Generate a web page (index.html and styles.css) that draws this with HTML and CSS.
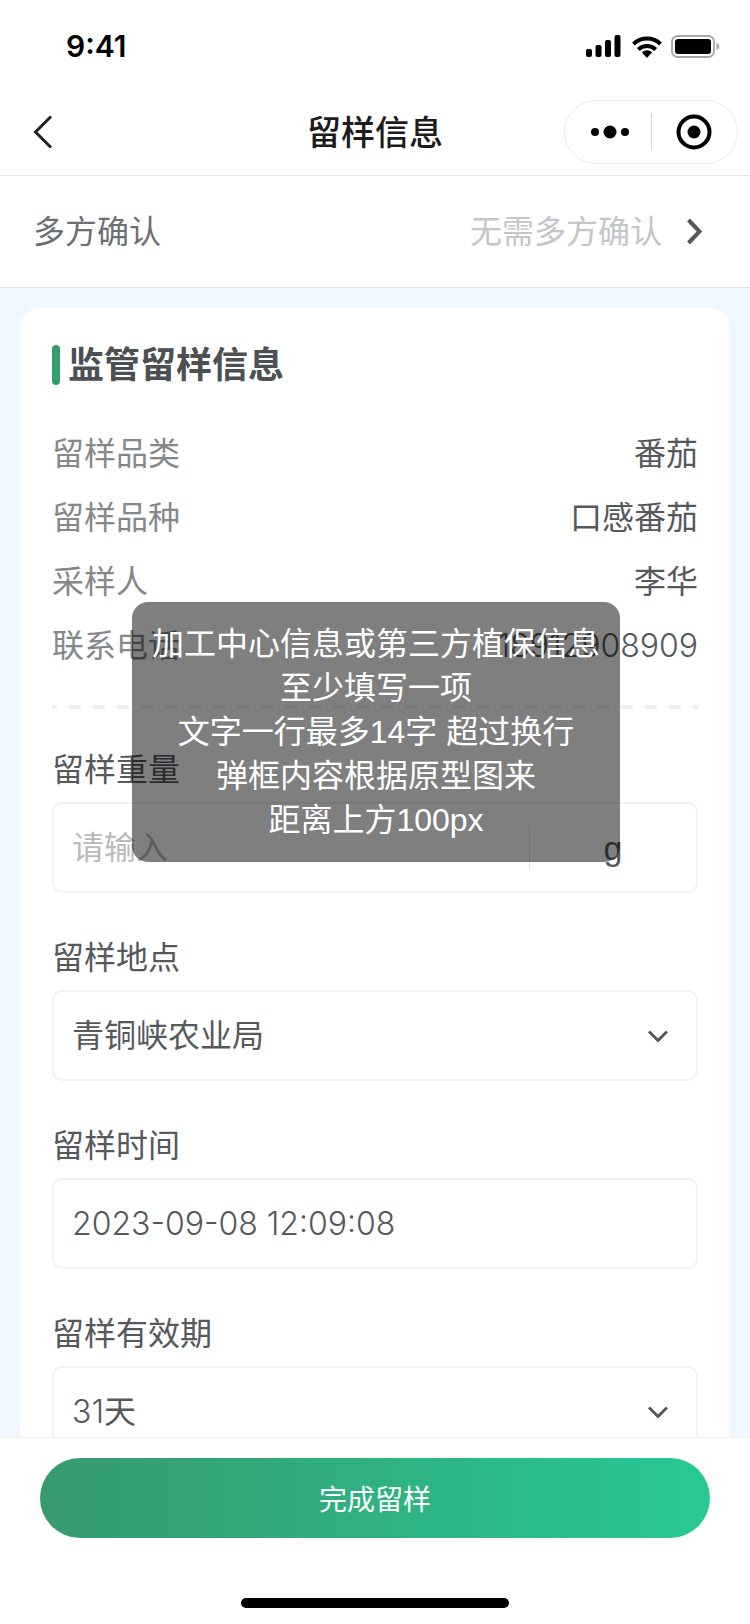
FILE: index.html
```html
<!DOCTYPE html>
<html lang="zh-CN">
<head>
<meta charset="utf-8">
<title>留样信息</title>
<link rel="stylesheet" href="styles.css">
</head>
<body>
<div class="page">
  <header class="status">
    <span class="time">9:41</span>
    <div class="status-icons">
      <svg class="ic-signal" width="35" height="22" viewBox="0 0 35 22"><rect x="0" y="14" width="6" height="8" rx="2"/><rect x="9.500" y="10" width="6" height="12" rx="2"/><rect x="19" y="5" width="6" height="17" rx="2"/><rect x="28.500" y="0" width="6" height="22" rx="2"/></svg>
      <svg class="ic-wifi" width="30" height="23" viewBox="0 0 30 23"><path d="M1.500 9A19.500 19.500 0 0 1 28.500 9" fill="none" stroke="#000" stroke-width="4"/><path d="M6.300 14.500A12.500 12.500 0 0 1 23.700 14.500" fill="none" stroke="#000" stroke-width="4"/><path d="M15 23 9.800 17.300A7.500 7.500 0 0 1 20.200 17.300z"/></svg>
      <svg class="ic-battery" width="49" height="23" viewBox="0 0 49 23"><rect x="1" y="1" width="42" height="21" rx="5.500" fill="none" stroke="#a6a6a6" stroke-width="1.800"/><rect x="4" y="4" width="36" height="15" rx="3"/><path d="M45.500 8v7c1.700-.5 2.800-1.900 2.800-3.500S47.200 8.500 45.500 8z" fill="#a6a6a6"/></svg>
    </div>
  </header>

  <nav class="nav">
    <svg class="nav-back" width="20" height="34" viewBox="0 0 20 34"><path d="M18 1.500 2.500 17 18 32.500" fill="none" stroke="#222" stroke-width="3"/></svg>
    <h1 class="nav-title">留样信息</h1>
    <div class="capsule">
      <svg class="capsule-dots" width="40" height="14" viewBox="0 0 40 14"><circle cx="5" cy="7" r="4"/><circle cx="20" cy="7" r="6.500"/><circle cx="35" cy="7" r="4"/></svg>
      <span class="capsule-line"></span>
      <svg class="capsule-target" width="36" height="36" viewBox="0 0 36 36"><circle cx="18" cy="18" r="15.500" fill="none" stroke="#000" stroke-width="4"/><circle cx="18" cy="18" r="6.500"/></svg>
    </div>
  </nav>

  <section class="confirm">
    <span class="confirm-label">多方确认</span>
    <span class="confirm-value">无需多方确认</span>
    <svg class="confirm-arrow" width="17" height="27" viewBox="0 0 17 27"><path d="M2.500 2 13.500 13.500 2.500 25" fill="none" stroke="#55585b" stroke-width="4"/></svg>
  </section>

  <main class="content">
    <div class="card">
      <div class="heading"><span class="heading-bar"></span><h2 class="heading-text">监管留样信息</h2></div>
      <dl class="info">
        <div class="info-row"><dt>留样品类</dt><dd>番茄</dd></div>
        <div class="info-row"><dt>留样品种</dt><dd>口感番茄</dd></div>
        <div class="info-row"><dt>采样人</dt><dd>李华</dd></div>
        <div class="info-row"><dt>联系电话</dt><dd class="num">18912908909</dd></div>
      </dl>
      <div class="dash"></div>
      <div class="field">
        <label class="field-label">留样重量</label>
        <div class="box box-unit">
          <span class="placeholder">请输入</span>
          <span class="unit">g</span>
        </div>
      </div>
      <div class="field">
        <label class="field-label">留样地点</label>
        <div class="box">
          <span>青铜峡农业局</span>
          <svg class="select-arrow" width="22" height="14" viewBox="0 0 22 14"><path d="M2 2.500 11 11.500 20 2.500" fill="none" stroke="#55585b" stroke-width="3"/></svg>
        </div>
      </div>
      <div class="field">
        <label class="field-label">留样时间</label>
        <div class="box"><span class="num">2023-09-08 12:09:08</span></div>
      </div>
      <div class="field">
        <label class="field-label">留样有效期</label>
        <div class="box">
          <span><span class="num">31</span>天</span>
          <svg class="select-arrow" width="22" height="14" viewBox="0 0 22 14"><path d="M2 2.500 11 11.500 20 2.500" fill="none" stroke="#55585b" stroke-width="3"/></svg>
        </div>
      </div>
    </div>
  </main>

  <footer class="footer">
    <button class="submit">完成留样</button>
    <span class="home"></span>
  </footer>

  <div class="toast">加工中心信息或第三方植保信息<br>至少填写一项<br>文字一行最多14字 超过换行<br>弹框内容根据原型图来<br>距离上方100px</div>
</div>
</body>
</html>
```

FILE: styles.css
```css
* { box-sizing: border-box; }
html, body { margin: 0; padding: 0; }
body {
  font-family: "Liberation Sans", "Noto Sans CJK SC", sans-serif;
  color: #55595c;
  background: #fff;
}
.page {
  position: relative;
  width: 750px;
  height: 1624px;
  overflow: hidden;
  display: flex;
  flex-direction: column;
  background: #f1f7fe;
}
.num { font-family: Inter, "Noto Sans CJK SC", sans-serif; font-size: 32px; font-weight: 300; }

.status {
  height: 88px;
  flex: none;
  background: #fff;
  display: flex;
  align-items: center;
  justify-content: space-between;
  padding: 4px 30px 0 66px;
}
.time { font-family: Inter, sans-serif; font-size: 30px; font-weight: 600; color: #000; }
.status-icons { display: flex; align-items: center; }
.status-icons svg { display: block; fill: #000; }
.ic-wifi { margin: 0 9px 0 11px; }

.nav {
  height: 88px;
  flex: none;
  background: #fff;
  border-bottom: 1px solid #e6e6e6;
  display: grid;
  grid-template-columns: 1fr auto 1fr;
  align-items: center;
}
.nav-back { margin-left: 33px; display: block; }
.nav-title { margin: 0; font-size: 34px; font-weight: 500; color: #1c1c1c; line-height: 1; padding-top: 2px; }
.capsule {
  justify-self: end;
  margin-right: 12px;
  width: 174px;
  height: 64px;
  border: 1px solid #ececec;
  border-radius: 32px;
  display: flex;
  align-items: center;
  padding-left: 25px;
}
.capsule svg { display: block; fill: #000; flex: none; }
.capsule-line { width: 1px; height: 37px; background: #d4d4d4; margin: 0 24px 0 21px; flex: none; }

.confirm {
  height: 112px;
  flex: none;
  background: #fff;
  border-bottom: 1px solid #e3e5e8;
  display: flex;
  align-items: center;
  padding: 0 47px 0 33px;
  font-size: 32px;
  line-height: 44px;
}
.confirm-label { color: #6c7073; flex: 1; }
.confirm-value { color: #c4c6c8; }
.confirm-arrow { margin-left: 24px; display: block; }

.content { flex: 1; min-height: 0; padding: 20px 20px 0; }
.card {
  background: #fff;
  border-radius: 20px 20px 0 0;
  padding: 37px 32px 0;
}
.heading { display: flex; align-items: center; height: 40px; }
.heading-bar { width: 8px; height: 40px; border-radius: 4px; background: #339d6c; flex: none; }
.heading-text { margin: 0 0 0 8px; padding-top: 2px; font-size: 36px; font-weight: 700; color: #4c5053; line-height: 40px; }

.info { margin: 37px 0 0; }
.info-row {
  height: 64px;
  display: flex;
  align-items: center;
  justify-content: space-between;
  font-size: 32px;
  line-height: 44px;
}
.info-row dt { color: #84888b; }
.info-row dd { margin: 0; color: #55595c; }

.dash {
  margin: 27px 0 0;
  height: 4px;
  background: linear-gradient(90deg, #eceef0 0 12px, transparent 12px) -7px 0 / 24px 100% repeat-x;
}

.field { margin-top: 43px; }
.dash + .field { margin-top: 39px; }
.field-label { display: block; font-size: 32px; line-height: 44px; color: #55595c; }
.box {
  margin-top: 10px;
  height: 91px;
  border: 2px solid #f1f2f3;
  border-radius: 10px;
  display: flex;
  align-items: center;
  justify-content: space-between;
  padding: 0 28px 0 18px;
  font-size: 32px;
  line-height: 44px;
  color: #55595c;
}
.box-unit { padding-right: 0; }
.placeholder { color: #b8babc; }
.unit {
  width: 167px;
  height: 44px;
  border-left: 1px solid #e4e6e7;
  text-align: center;
  line-height: 44px;
  font-size: 34px;
}
.select-arrow { display: block; margin-right: -1px; }

.footer {
  position: absolute;
  left: 0;
  right: 0;
  bottom: 0;
  height: 187px;
  background: #fff;
  border-top: 1px solid #f1f2f3;
  display: flex;
  flex-direction: column;
  align-items: center;
  padding-top: 20px;
}
.submit {
  width: 670px;
  height: 80px;
  border: 0;
  border-radius: 40px;
  background: linear-gradient(90deg, #379a6d, #27c895);
  color: #fff;
  font: inherit;
  font-size: 28px;
}
.home { width: 268px; height: 10px; border-radius: 5px; background: #000; margin-top: 60px; }

.toast {
  position: absolute;
  left: 132px;
  top: 602px;
  width: 488px;
  height: 260px;
  padding: 20px 0;
  background: rgba(0, 0, 0, .5);
  border-radius: 16px;
  color: #fff;
  font-size: 32px;
  line-height: 44px;
  text-align: center;
}
```
